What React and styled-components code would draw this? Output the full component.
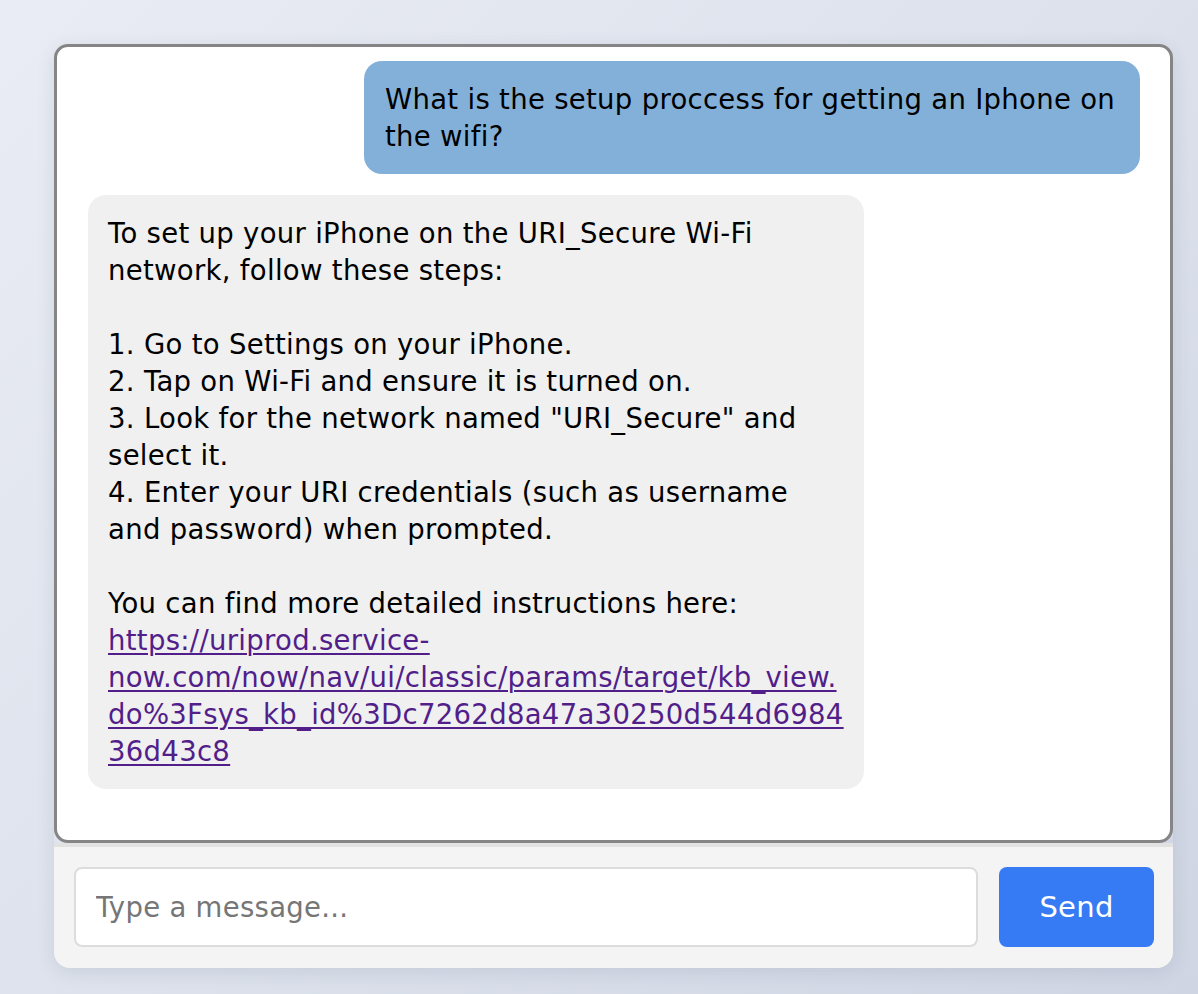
import React from "react";
import styled, { createGlobalStyle } from "styled-components";

const Global = createGlobalStyle`
    html, body {
        margin: 0;
        padding: 0;
    }
    body {
        min-height: 994px;
        background: linear-gradient(135deg, #e9ecf4 0%, #dde2ec 50%, #cfd5e3 100%);
        font-family: "DejaVu Sans", "Liberation Sans", Arial, sans-serif;
    }
`

const Page = styled.div`
    padding: 44px 25px 25px 54px;
`

const Wrapper = styled.div`
    display: flex;
    flex-direction: column;
    border-radius: 16px;
    box-shadow: 0 4px 18px rgba(60, 70, 100, 0.12);
`

const ChatBox = styled.div`
    height: 799px;
    box-sizing: border-box;
    background: #fff;
    border: 3px solid #858585;
    border-radius: 14px;
    padding: 14px 30px 20px 31px;
    display: flex;
    flex-direction: column;
    gap: 21px;
    overflow-y: auto;
`

const Bubble = styled.div`
    max-width: 776px;
    box-sizing: border-box;
    padding: 20px ${(p) => (p.$user ? "21px" : "20px")} 19px;
    border-radius: 18px;
    font-size: 27.5px;
    letter-spacing: 0.3px;
    line-height: 37px;
    color: #000;
    white-space: pre-wrap;
    overflow-wrap: break-word;
    align-self: ${(p) => (p.$user ? "flex-end" : "flex-start")};
    background: ${(p) => (p.$user ? "#83b0d9" : "#f0f0f0")};

    a {
        color: #521e8a;
        text-decoration: underline;
        text-decoration-thickness: 2px;
        text-underline-offset: 3px;
    }
`

const InputBar = styled.div`
    display: flex;
    gap: 21px;
    align-items: center;
    background: #f4f4f4;
    border-top: 4px solid #e2e2e2;
    border-radius: 0 0 16px 16px;
    padding: 20px 19px 21px 20px;
`

const Input = styled.input`
    flex: 1;
    height: 80px;
    box-sizing: border-box;
    border: 2px solid #dcdcdc;
    border-radius: 8px;
    padding: 0 20px;
    font-family: "DejaVu Sans", "Liberation Sans", Arial, sans-serif;
    font-size: 27.5px;
    letter-spacing: 0.3px;
    background: #fff;
    outline: none;

    &::placeholder {
        color: #767676;
    }
`

const SendButton = styled.button`
    width: 155px;
    height: 80px;
    border: none;
    border-radius: 8px;
    background: #377bf4;
    color: #fff;
    font-family: "DejaVu Sans", "Liberation Sans", Arial, sans-serif;
    font-size: 29px;
    letter-spacing: 0.3px;
    cursor: pointer;
`

const link = "https://uriprod.service-now.com/now/nav/ui/classic/params/target/kb_view.do%3Fsys_kb_id%3Dc7262d8a47a30250d544d698436d43c8";

const App = () => {
    return (
        <>
            <Global />
            <Page>
                <Wrapper>
                    <ChatBox>
                        <Bubble $user>What is the setup proccess for getting an Iphone on the wifi?</Bubble>
                        <Bubble>
{`To set up your iPhone on the URI_Secure Wi-Fi network, follow these steps:

1. Go to Settings on your iPhone.
2. Tap on Wi-Fi and ensure it is turned on.
3. Look for the network named "URI_Secure" and select it.
4. Enter your URI credentials (such as username and password) when prompted.

You can find more detailed instructions here: `}<a href={link}>{link}</a>
                        </Bubble>
                    </ChatBox>
                    <InputBar>
                        <Input placeholder="Type a message..." />
                        <SendButton>Send</SendButton>
                    </InputBar>
                </Wrapper>
            </Page>
        </>
    )
}

export default App;
